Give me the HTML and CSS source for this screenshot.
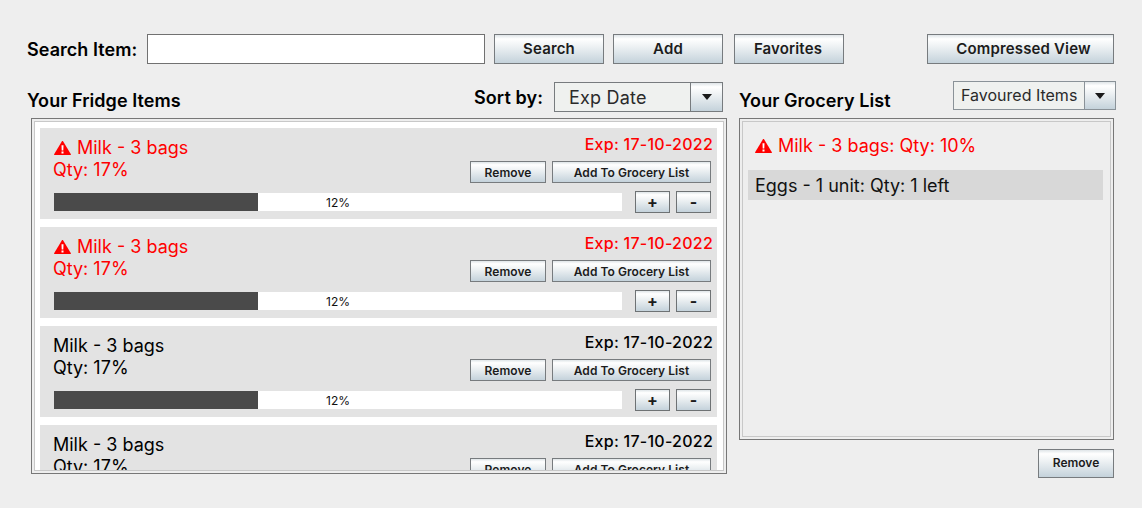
FILE: index.html
```html
<!DOCTYPE html>
<html lang="en">
<head>
<meta charset="utf-8">
<title>Fridge Items</title>
<link rel="stylesheet" href="styles.css">
</head>
<body>
<svg class="defs" width="0" height="0" aria-hidden="true">
  <symbol id="warn" viewBox="0 0 17 14">
    <path fill="#ff0000" d="M8.500 0c.3 0 .5.100.7.400l7.700 12.900c.2.400 0 .7-.4.700H.5c-.4 0-.6-.3-.4-.7L7.800.4c.2-.3.400-.4.700-.4z"/>
    <path fill="#ffffff" d="M7.500 4.300h2l-.2 5.200H7.700zM7.500 10.500h2v2h-2z"/>
  </symbol>
</svg>
<div class="page">
  <div class="toolbar">
    <label class="search-label" for="q">Search Item:</label>
    <input class="search-input" id="q" type="text">
    <button class="btn btn-top btn-search">Search</button>
    <button class="btn btn-top btn-add">Add</button>
    <button class="btn btn-top btn-fav">Favorites</button>
    <button class="btn btn-top btn-compressed">Compressed View</button>
  </div>
  <div class="main">
    <section class="col-left">
      <div class="head-left">
        <h2 class="title">Your Fridge Items</h2>
        <span class="sort-label">Sort by:</span>
        <div class="combo combo-sort"><span class="combo-value">Exp Date</span><span class="combo-arrow"><i class="tri"></i></span></div>
      </div>
      <div class="panel panel-left">
        <div class="panel-inner list-fridge">
          <article class="item alert">
            <div class="item-top">
              <div class="item-info">
                <div class="item-name"><svg class="warn"><use href="#warn"/></svg>Milk - 3 bags</div>
                <div class="item-qty">Qty: 17%</div>
              </div>
              <div class="item-side">
                <div class="item-exp">Exp: 17-10-2022</div>
                <div class="item-actions"><button class="btn btn-sm btn-remove">Remove</button><button class="btn btn-sm btn-grocery">Add To Grocery List</button></div>
              </div>
            </div>
            <div class="item-bottom">
              <div class="bar"><div class="bar-fill" style="width:36%"></div><span class="bar-text">12%</span></div>
              <button class="btn btn-sm btn-step">+</button><button class="btn btn-sm btn-step">-</button>
            </div>
          </article>
          <article class="item alert">
            <div class="item-top">
              <div class="item-info">
                <div class="item-name"><svg class="warn"><use href="#warn"/></svg>Milk - 3 bags</div>
                <div class="item-qty">Qty: 17%</div>
              </div>
              <div class="item-side">
                <div class="item-exp">Exp: 17-10-2022</div>
                <div class="item-actions"><button class="btn btn-sm btn-remove">Remove</button><button class="btn btn-sm btn-grocery">Add To Grocery List</button></div>
              </div>
            </div>
            <div class="item-bottom">
              <div class="bar"><div class="bar-fill" style="width:36%"></div><span class="bar-text">12%</span></div>
              <button class="btn btn-sm btn-step">+</button><button class="btn btn-sm btn-step">-</button>
            </div>
          </article>
          <article class="item">
            <div class="item-top">
              <div class="item-info">
                <div class="item-name">Milk - 3 bags</div>
                <div class="item-qty">Qty: 17%</div>
              </div>
              <div class="item-side">
                <div class="item-exp">Exp: 17-10-2022</div>
                <div class="item-actions"><button class="btn btn-sm btn-remove">Remove</button><button class="btn btn-sm btn-grocery">Add To Grocery List</button></div>
              </div>
            </div>
            <div class="item-bottom">
              <div class="bar"><div class="bar-fill" style="width:36%"></div><span class="bar-text">12%</span></div>
              <button class="btn btn-sm btn-step">+</button><button class="btn btn-sm btn-step">-</button>
            </div>
          </article>
          <article class="item">
            <div class="item-top">
              <div class="item-info">
                <div class="item-name">Milk - 3 bags</div>
                <div class="item-qty">Qty: 17%</div>
              </div>
              <div class="item-side">
                <div class="item-exp">Exp: 17-10-2022</div>
                <div class="item-actions"><button class="btn btn-sm btn-remove">Remove</button><button class="btn btn-sm btn-grocery">Add To Grocery List</button></div>
              </div>
            </div>
            <div class="item-bottom">
              <div class="bar"><div class="bar-fill" style="width:36%"></div><span class="bar-text">12%</span></div>
              <button class="btn btn-sm btn-step">+</button><button class="btn btn-sm btn-step">-</button>
            </div>
          </article>
        </div>
      </div>
    </section>
    <section class="col-right">
      <div class="head-right">
        <h2 class="title">Your Grocery List</h2>
        <div class="combo combo-fav"><span class="combo-value">Favoured Items</span><span class="combo-arrow"><i class="tri"></i></span></div>
      </div>
      <div class="panel panel-right">
        <div class="panel-inner list-grocery">
          <div class="g-row alert"><svg class="warn"><use href="#warn"/></svg>Milk - 3 bags: Qty: 10%</div>
          <div class="g-row selected">Eggs - 1 unit: Qty: 1 left</div>
        </div>
      </div>
      <div class="foot-right"><button class="btn btn-foot">Remove</button></div>
    </section>
  </div>
</div>
</body>
</html>
```

FILE: styles.css
```css
* { box-sizing: border-box; }
html, body { margin: 0; padding: 0; height: 100%; }
body {
  background: #eeeeee;
  font-family: Inter, "Liberation Sans", sans-serif;
  color: #000;
  overflow: hidden;
}
.defs { display: block; height: 0; }
.page { padding: 34px 26px 0 27px; width: 1142px; }

.btn {
  font-family: inherit;
  font-weight: 600;
  color: #1c1c1c;
  border: 1px solid #777b7e;
  border-radius: 0;
  padding: 0;
  background: linear-gradient(180deg, #dfe5e8 0%, #ffffff 14%, #edf1f3 42%, #c4d2db 100%);
  white-space: nowrap;
}

.toolbar { display: flex; align-items: center; height: 30px; }
.search-label { font-size: 18px; font-weight: 600; width: 120px; flex: none; letter-spacing: .05px; }
.search-input {
  width: 338px; height: 30px; flex: none;
  border: 1px solid #717171; background: #fff; padding: 0; outline: 0;
}
.btn-top { height: 30px; width: 110px; font-size: 15px; flex: none; letter-spacing: .15px; padding-bottom: 2px; }
.btn-search { margin-left: 9px; }
.btn-add { margin-left: 9px; }
.btn-fav { margin-left: 11px; padding-right: 2px; }
.btn-compressed { margin-left: 83px; width: 187px; padding-left: 6px; }

.main { display: flex; margin-top: 18px; }
.col-left { width: 700px; flex: none; }
.col-right { width: 377px; flex: none; margin-left: 12px; margin-top: -1px; }

.title { margin: 0; font-size: 18px; font-weight: 600; line-height: 22px; letter-spacing: .05px; }
.head-left { display: flex; height: 30px; align-items: flex-end; }
.head-left .title { flex: 1; line-height: 20px; margin-bottom: 1px; }
.sort-label { font-size: 18px; font-weight: 600; line-height: 30px; align-self: center; margin-right: 11px; letter-spacing: .1px; padding-top: 1px; }

.combo { display: flex; flex: none; border: 1px solid #777b7e; background: #eff1ef; }
.combo-value { flex: 1; color: #2a2a2a; }
.combo-arrow {
  flex: none; display: flex; align-items: center; justify-content: center;
  border-left: 1px solid #777b7e;
  background: linear-gradient(180deg, #dfe5e8 0%, #ffffff 14%, #edf1f3 42%, #c4d2db 100%);
}
.tri { display: block; width: 0; height: 0; border-left: 5.500px solid transparent; border-right: 5.500px solid transparent; border-top: 6px solid #1a1a1a; }
.combo-sort { width: 169px; height: 30px; margin-right: 4px; }
.combo-sort .combo-value { font-size: 18px; line-height: 30px; padding-left: 14px; letter-spacing: .2px; }
.combo-sort .combo-arrow { width: 32px; }
.combo-fav { width: 163px; height: 29px; border-color: #8a9298; }
.combo-fav .combo-value { font-size: 16px; line-height: 27px; padding-left: 7px; }
.combo-fav .combo-arrow { width: 31px; border-left-color: #8a9298; }

.panel { border: 1px solid #777; padding: 2px; background: #eee; display: flex; }
.panel-inner { flex: 1; border: 1px solid #c8c8c8; overflow: hidden; min-width: 0; }
.panel-left { width: 696px; height: 356px; margin: 6px 0 0 4px; }
.list-fridge {
  background: #fff; padding: 6px 6px 0 5px;
  display: flex; flex-direction: column; gap: 8px;
}
.item { flex: none; height: 91px; background: #e3e3e3; padding: 8px 4px 0 13px; }
.item.alert { color: #ff0000; }
.item-top { display: flex; justify-content: space-between; height: 57px; }
.item-info { font-size: 18px; line-height: 22px; }
.item-name { display: flex; align-items: center; padding-top: 1px; }
.warn { width: 17px; height: 14px; margin: 0 6px 0 1px; flex: none; }
.item-side { display: flex; flex-direction: column; align-items: flex-end; }
.item-exp { font-size: 16px; font-weight: 500; line-height: 18px; letter-spacing: .25px; margin-top: -1px; }
.item-actions { display: flex; gap: 6px; margin-top: 8px; margin-right: 2px; }
.btn-sm { height: 22px; font-size: 12px; flex: none; letter-spacing: .05px; }
.btn-remove { width: 76px; }
.btn-grocery { width: 159px; }
.item-bottom { display: flex; align-items: center; height: 22px; margin-top: -2px; padding-right: 2px; margin-left: 1px; }
.bar { flex: none; width: 568px; height: 18px; background: #fff; position: relative; margin-right: 13px; }
.bar-fill { height: 100%; background: #4a4a4a; }
.bar-text { position: absolute; inset: 0; text-align: center; font-size: 12px; line-height: 20px; color: #111; }
.btn-step { width: 35px; font-size: 16px; font-weight: 700; line-height: 18px; border-color: #6e7274; }
.btn-step + .btn-step { margin-left: 6px; }

.head-right { display: flex; height: 29px; justify-content: space-between; align-items: flex-end; }
.head-right .title { margin-bottom: -2px; }
.panel-right { width: 375px; height: 322px; margin-top: 8px; }
.list-grocery { padding: 8px 7px 0 5px; display: flex; flex-direction: column; gap: 10px; }
.g-row { height: 30px; font-size: 18px; line-height: 30px; display: flex; align-items: center; padding: 1px 0 0 6px; }
.g-row.alert { color: #ff0000; }
.g-row.selected { background: #d8d8d8; color: #111; padding-left: 7px; }
.foot-right { display: flex; justify-content: flex-end; width: 375px; margin-top: 9px; }
.btn-foot { width: 76px; height: 29px; font-size: 12px; padding-bottom: 2px; }
```
